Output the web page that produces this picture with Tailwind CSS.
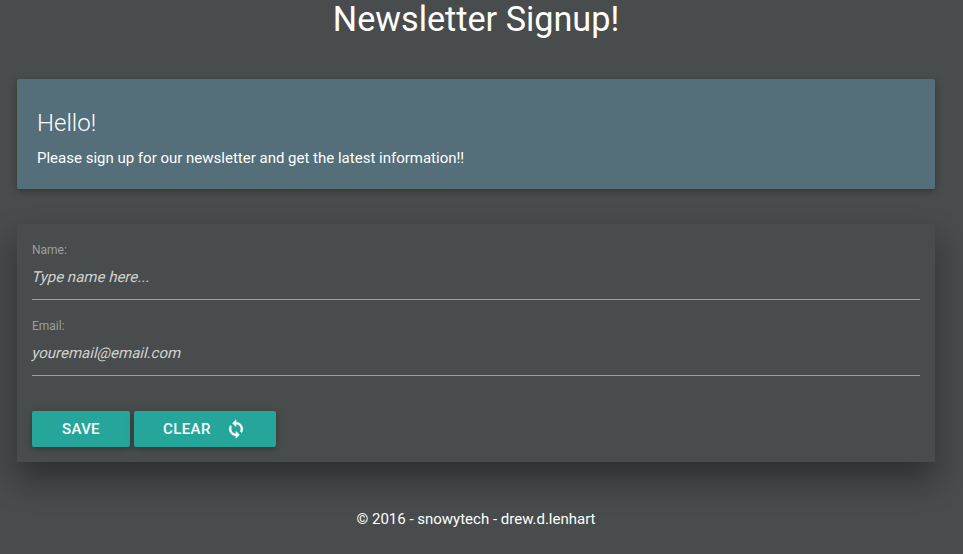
<!DOCTYPE html>
<html lang="en"><head><meta charset="utf-8"><title>Newsletter Signup</title>
<script src="https://cdn.jsdelivr.net/npm/@tailwindcss/browser@4"></script></head>
<body class="h-[554px] overflow-hidden bg-[#484c4c] font-['Roboto',sans-serif] text-[15px] leading-[22.5px] text-white">
<main class="ml-[17px] w-[918px]">
<h1 class="h-[79px] text-center text-[34.2px] leading-[38px]">Newsletter Signup!</h1>
<section class="h-[110px] rounded-xs bg-[#546e7a] p-5 shadow-[0_2px_5px_0_rgba(0,0,0,0.16),0_2px_10px_0_rgba(0,0,0,0.12)]">
<h2 class="mb-0 text-[24px] leading-[48px] font-light">Hello!</h2>
<p>Please sign up for our newsletter and get the latest information!!</p>
</section>
<form class="mt-[35px] h-[238px] px-[15px] pt-[17px] shadow-[0_17px_30px_0_rgba(12,6,12,0.42)]">
<label class="block h-[76px] text-[12px] leading-[18px] text-[#9e9e9e]">Name:
<span class="block h-[41px] border-b border-[#9e9e9e]"><input class="block h-10 w-full origin-left -skew-x-[14deg] pb-[5px] text-[15px] text-white outline-none placeholder:text-[#d1d1d1]" placeholder="Type name here..."></span></label>
<label class="block h-[76px] text-[12px] leading-[18px] text-[#9e9e9e]">Email:
<span class="block h-[41px] border-b border-[#9e9e9e]"><input class="block h-10 w-full origin-left -skew-x-[14deg] pb-[5px] text-[15px] text-white outline-none placeholder:text-[#d1d1d1]" placeholder="youremail@email.com"></span></label>
<div class="mt-[18px] flex gap-1">
<button type="button" class="h-9 w-[98px] rounded-xs bg-[#26a69a] font-medium tracking-[0.3px] shadow-[0_2px_5px_0_rgba(0,0,0,0.16),0_2px_10px_0_rgba(0,0,0,0.12)]">SAVE</button>
<button type="button" class="flex h-9 w-[142px] items-center justify-between rounded-xs bg-[#26a69a] pr-[30px] pl-[29px] font-medium tracking-[0.4px] shadow-[0_2px_5px_0_rgba(0,0,0,0.16),0_2px_10px_0_rgba(0,0,0,0.12)]">CLEAR
<svg class="size-5" viewBox="0 0 24 24" fill="currentColor" stroke="currentColor" stroke-width=".8"><path d="M12 4V1L8 5l4 4V6c3.31 0 6 2.69 6 6 0 1.01-.25 1.97-.7 2.8l1.46 1.46C19.54 15.03 20 13.57 20 12c0-4.42-3.58-8-8-8zm0 14c-3.31 0-6-2.69-6-6 0-1.01.25-1.97.7-2.8L5.24 7.74C4.46 8.97 4 10.43 4 12c0 4.42 3.58 8 8 8v3l4-4-4-4v3z"/></svg></button>
</div></form>
<footer class="mt-[46px] text-center">© 2016 - snowytech - drew.d.lenhart</footer>
</main></body></html>
